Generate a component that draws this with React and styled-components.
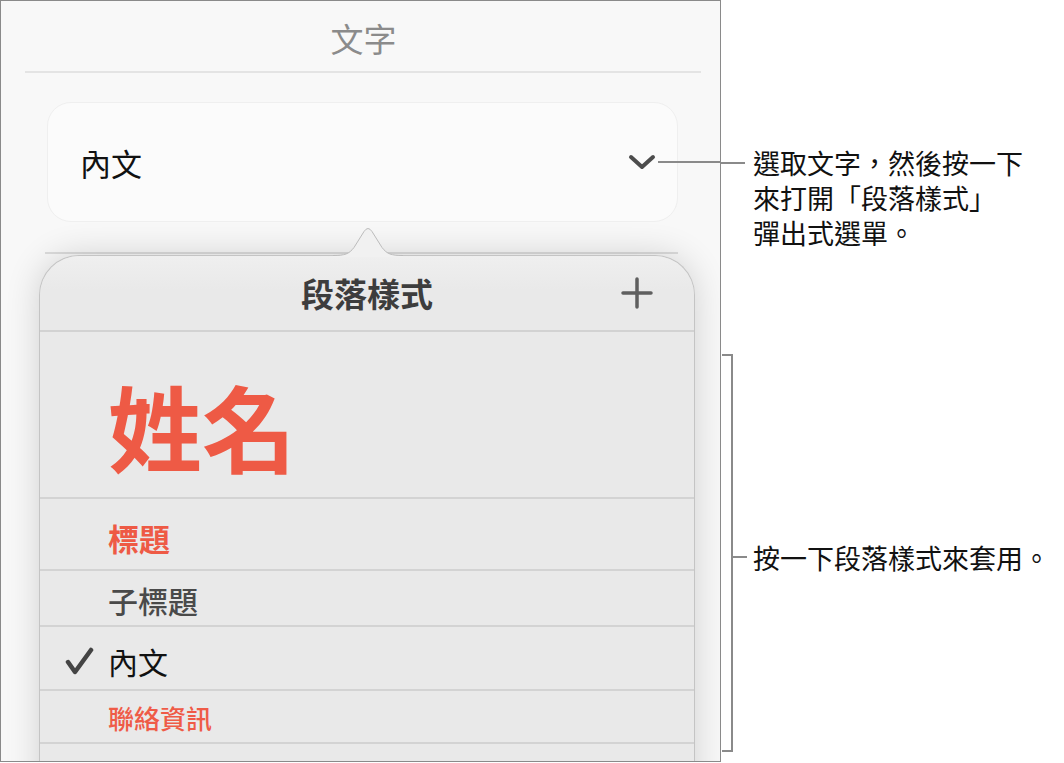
import React from "react";
import styled, { createGlobalStyle } from "styled-components";

const GlobalStyle = createGlobalStyle`
    html, body {
        margin: 0;
        padding: 0;
        background: #ffffff;
    }
    body {
        font-family: "Noto Sans CJK TC", "Noto Sans", sans-serif;
        color: #111111;
    }
`;

const Page = styled.div`
    display: flex;
    align-items: flex-start;
    width: 1064px;
    height: 763px;
`;

const Panel = styled.section`
    box-sizing: border-box;
    width: 721px;
    height: 762px;
    flex-shrink: 0;
    border: 1px solid #8a8a8a;
    background: #f8f8f8;
    display: flex;
    flex-direction: column;
    overflow: hidden;
`;

const PanelTitle = styled.h2`
    margin: 0;
    height: 70px;
    padding: 4px 0 0 6px;
    box-sizing: border-box;
    display: flex;
    align-items: center;
    justify-content: center;
    font-size: 33px;
    font-weight: 400;
    color: #8b8b8b;
`;

const Rule = styled.div`
    height: 2px;
    flex-shrink: 0;
    background: ${p => p.$color};
    margin: ${p => p.$margin};
`;

const StyleSelect = styled.div`
    box-sizing: border-box;
    height: 120px;
    flex-shrink: 0;
    margin: 29px 42px 0 46px;
    padding: 0 21px 0 32px;
    border: 1px solid #efefef;
    border-radius: 24px;
    background: #fbfbfb;
    display: flex;
    align-items: center;
    justify-content: space-between;
    font-size: 31px;
    color: #111;
`;

const ChevronWrap = styled.span`
    position: relative;
    display: flex;
`;

const InnerLeader = styled.span`
    position: absolute;
    left: calc(100% + 2px);
    top: 50%;
    width: 80px;
    height: 2px;
    margin-top: -1px;
    background: #8a8a8a;
`;

const Sheet = styled.div`
    flex: 1;
    min-height: 0;
    display: flex;
    flex-direction: column;
    padding-top: 30px;
`;

const Popover = styled.div`
    position: relative;
    flex: 1;
    margin: 1px 25px 0 38px;
    background: #e9e9e9;
    border: 1px solid #c4c4c4;
    border-bottom: none;
    border-radius: 40px 40px 0 0;
    box-shadow: 0 0 34px rgba(0, 0, 0, 0.16);
`;

const ArrowSvg = styled.svg`
    position: absolute;
    top: -30px;
    left: 293px;
`;

const PopoverHeader = styled.div`
    box-sizing: border-box;
    height: 76px;
    display: grid;
    grid-template-columns: 1fr auto 1fr;
    align-items: center;
    border-bottom: 2px solid #d2d2d2;
    border-radius: 40px 40px 0 0;
    background: linear-gradient(#efefef, #e9e9e9 45%);
`;

const PopoverTitle = styled.span`
    grid-column: 2;
    font-size: 33px;
    font-weight: 700;
    color: #3d3d3d;
    line-height: 1;
`;

const AddButton = styled.span`
    grid-column: 3;
    justify-self: end;
    display: flex;
    padding-right: 41px;
`;

const StyleRow = styled.div`
    box-sizing: border-box;
    height: ${p => p.$h}px;
    padding: ${p => p.$shift}px 0 0 25px;
    border-bottom: 2px solid #d3d3d3;
    display: flex;
    align-items: center;
`;

const CheckSlot = styled.span`
    width: 43px;
    flex-shrink: 0;
    display: flex;
    align-items: center;
`;

const StyleLabel = styled.span`
    font-size: ${p => p.$size}px;
    font-weight: ${p => p.$weight};
    color: ${p => p.$color};
    line-height: 1;
    white-space: nowrap;
`;

const Notes = styled.aside`
    width: 343px;
    padding-top: 145px;
    display: flex;
    flex-direction: column;
`;

const Callout = styled.div`
    display: flex;
    align-items: flex-start;
`;

const Leader = styled.span`
    width: 24px;
    height: 2px;
    flex-shrink: 0;
    margin: 17px 8px 0 0;
    background: #8a8a8a;
`;

const NoteText = styled.p`
    margin: 0;
    font-size: 27px;
    line-height: 35px;
    color: #111;
    white-space: nowrap;
`;

const Bracket = styled.div`
    height: 398px;
    margin: 104px 0 0 1px;
    display: flex;
    align-items: center;
`;

const BracketShape = styled.span`
    box-sizing: border-box;
    align-self: stretch;
    width: 11px;
    border: 2px solid #8a8a8a;
    border-left: none;
`;

const BracketNote = styled.div`
    display: flex;
    align-items: center;
    margin-top: 8px;
`;

const Tick = styled.span`
    width: 14px;
    height: 2px;
    margin-right: 6px;
    background: #8a8a8a;
`;

const Chevron = () => (
    <svg width="28" height="16" viewBox="0 0 28 16">
        <polyline points="3,3 14,13 25,3" fill="none" stroke="#4c4c4c" strokeWidth="4"
            strokeLinecap="round" strokeLinejoin="round" />
    </svg>
);

const Plus = () => (
    <svg width="32" height="32" viewBox="0 0 32 32">
        <path d="M16 2 V30 M2 16 H30" stroke="#5f5f5f" strokeWidth="3.5" strokeLinecap="round" />
    </svg>
);

const Check = () => (
    <svg width="29" height="28" viewBox="0 0 29 28">
        <path d="M3 15 L10 25 L26 3" fill="none" stroke="#444" strokeWidth="4.5"
            strokeLinecap="round" strokeLinejoin="round" />
    </svg>
);

const Arrow = () => (
    <ArrowSvg width="70" height="31" viewBox="0 0 70 31">
        <path d="M0 31 L0 29.5 C12 29.5 16 28 21 21.5 L31 5.5 Q35 -0.5 39 5.5 L49 21.5 C54 28 58 29.5 70 29.5 L70 31 Z"
            fill="#f1f1f1" />
        <path d="M0 29.5 C12 29.5 16 28 21 21.5 L31 5.5 Q35 -0.5 39 5.5 L49 21.5 C54 28 58 29.5 70 29.5"
            fill="none" stroke="#bcbcbc" strokeWidth="1" />
    </ArrowSvg>
);

const styles = [
    { name: "姓名", h: 167, shift: 20, size: 94, weight: 700, color: "#ee5a45" },
    { name: "標題", h: 72, shift: 7, size: 31, weight: 700, color: "#ee5a45" },
    { name: "子標題", h: 56, shift: 3, size: 30, weight: 500, color: "#4a4a4a" },
    { name: "內文", h: 64, shift: 6, size: 30, weight: 400, color: "#111111", checked: true },
    { name: "聯絡資訊", h: 53, shift: 3, size: 26, weight: 500, color: "#ef5b47" },
    { name: "", h: 60, shift: 0, size: 26, weight: 400, color: "#111111" },
];

const App = () => (
    <Page>
        <GlobalStyle />
        <Panel>
            <PanelTitle>文字</PanelTitle>
            <Rule $color="#e4e4e4" $margin="0 19px 0 24px" />
            <StyleSelect>
                <span>內文</span>
                <ChevronWrap>
                    <Chevron />
                    <InnerLeader />
                </ChevronWrap>
            </StyleSelect>
            <Sheet>
                <Rule $color="#dcdcdc" $margin="0 42px 0 44px" />
                <Popover>
                    <Arrow />
                    <PopoverHeader>
                        <PopoverTitle>段落樣式</PopoverTitle>
                        <AddButton><Plus /></AddButton>
                    </PopoverHeader>
                    {styles.map((s, i) => (
                        <StyleRow key={i} $h={s.h} $shift={s.shift}>
                            <CheckSlot>{s.checked && <Check />}</CheckSlot>
                            <StyleLabel $size={s.size} $weight={s.weight} $color={s.color}>
                                {s.name}
                            </StyleLabel>
                        </StyleRow>
                    ))}
                </Popover>
            </Sheet>
        </Panel>
        <Notes>
            <Callout>
                <Leader />
                <NoteText>
                    選取文字，然後按一下<br />
                    來打開「段落樣式」<br />
                    彈出式選單。
                </NoteText>
            </Callout>
            <Bracket>
                <BracketShape />
                <BracketNote>
                    <Tick />
                    <NoteText>按一下段落樣式來套用。</NoteText>
                </BracketNote>
            </Bracket>
        </Notes>
    </Page>
);

export default App;
